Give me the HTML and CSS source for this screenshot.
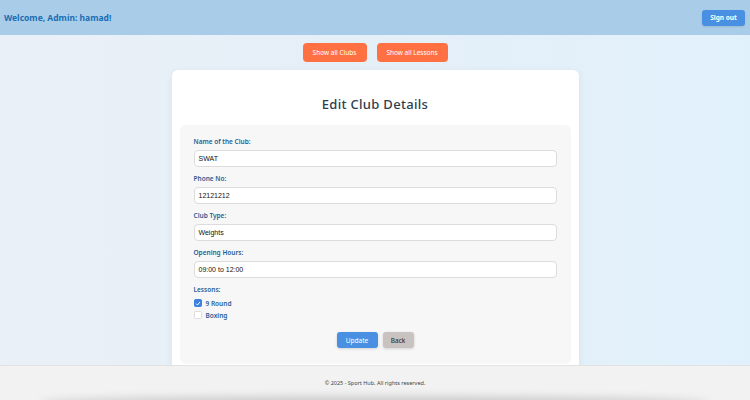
FILE: index.html
```html
<!DOCTYPE html>
<html lang="en">
<head>
<meta charset="utf-8">
<title>Edit Club</title>
<link rel="stylesheet" href="styles.css">
</head>
<body>
<header class="topbar">
  <span class="welcome">Welcome, Admin: hamad!</span>
  <button class="signout">Sign out</button>
</header>
<nav class="nav">
  <button class="nav-btn">Show all Clubs</button>
  <button class="nav-btn nav-btn-wide">Show all Lessons</button>
</nav>
<main class="card">
  <h1 class="title">Edit Club Details</h1>
  <form class="form">
    <div class="group">
      <label class="label">Name of the Club:</label>
      <div class="input">SWAT</div>
    </div>
    <div class="group">
      <label class="label">Phone No:</label>
      <div class="input">12121212</div>
    </div>
    <div class="group">
      <label class="label">Club Type:</label>
      <div class="input">Weights</div>
    </div>
    <div class="group">
      <label class="label">Opening Hours:</label>
      <div class="input">09:00 to 12:00</div>
    </div>
    <div class="lessons">
      <label class="label">Lessons:</label>
      <div class="check"><span class="box box-on"><svg viewBox="0 0 8 8" width="7" height="7"><path d="M1.5 4.2 L3.3 6 L6.6 2" fill="none" stroke="#fff" stroke-width="1.3"/></svg></span>9 Round</div>
      <div class="check"><span class="box"></span>Boxing</div>
    </div>
    <div class="actions">
      <button type="button" class="btn btn-update">Update</button>
      <button type="button" class="btn btn-back">Back</button>
    </div>
  </form>
</main>
<footer class="footer">© 2025 - Sport Hub. All rights reserved.</footer>
</body>
</html>
```

FILE: styles.css
```css
html, body {
  margin: 0;
  padding: 0;
}
body {
  font-family: "Noto Sans", "Open Sans", sans-serif;
  background: linear-gradient(90deg, #eaf0f7 0%, #e5eff8 50%, #e1f1fb 100%);
  min-height: 400px;
  overflow: hidden;
}
button {
  font-family: inherit;
  border: none;
  cursor: pointer;
}
.topbar {
  height: 35px;
  background: #a9cde8;
  display: flex;
  align-items: center;
  justify-content: space-between;
  padding: 0 5px 0 4px;
  box-sizing: border-box;
}
.welcome {
  color: #1b6db5;
  font-size: 8.5px;
  font-weight: 700;
}
.signout {
  width: 43px;
  height: 16px;
  background: #4a90e2;
  color: #fff;
  font-size: 6.5px;
  font-weight: 700;
  border-radius: 3px;
  padding: 0;
  box-shadow: 0 1px 2px rgba(0,0,0,0.1);
}
.nav {
  display: flex;
  justify-content: center;
  gap: 10px;
  padding: 8px 0 8px 0;
}
.nav-btn {
  width: 64px;
  height: 19px;
  background: #ff7043;
  color: #fff;
  font-size: 6.5px;
  border-radius: 4px;
  padding: 0;
}
.nav-btn-wide {
  width: 71px;
}
.card {
  width: 407px;
  margin: 0 auto;
  background: #fff;
  border-radius: 6px;
  box-shadow: 0 2px 8px rgba(0,0,0,0.06);
  padding: 25px 8px 8px;
  box-sizing: border-box;
}
.title {
  margin: 0 0 12px;
  text-align: center;
  font-size: 13px;
  line-height: 18px;
  font-weight: 500;
  color: #2c3e50;
  letter-spacing: 0.3px;
}
.form {
  background: #f7f7f7;
  border-radius: 6px;
  padding: 12px 14px 16px;
}
.group {
  margin-bottom: 7.5px;
}
.label {
  display: block;
  color: #2a5d92;
  font-size: 6.5px;
  font-weight: 600;
  line-height: 9px;
  margin-bottom: 3.5px;
}
.input {
  height: 17px;
  box-sizing: border-box;
  background: #fff;
  border: 1px solid #dcdcdc;
  border-radius: 4px;
  font-family: "Liberation Sans", Arial, sans-serif;
  font-size: 7px;
  color: #111;
  display: flex;
  align-items: center;
  padding: 0 4px;
}
.lessons {
  margin-top: 3px;
}
.lessons .label {
  margin-bottom: 3px;
}
.check {
  display: flex;
  align-items: center;
  gap: 4px;
  height: 12px;
  font-size: 6.5px;
  font-weight: 600;
  color: #2a5d92;
}
.box {
  width: 6px;
  height: 6px;
  border: 0.5px solid #ddd;
  border-radius: 1.5px;
  background: #fff;
  display: flex;
  align-items: center;
  justify-content: center;
}
.box-on {
  background: #3b82e0;
  border-color: #3b82e0;
}
.actions {
  display: flex;
  justify-content: center;
  gap: 5px;
  margin-top: 11px;
}
.btn {
  height: 16px;
  border-radius: 3px;
  font-size: 6.5px;
  padding: 0;
  box-shadow: 0 1px 3px rgba(0,0,0,0.15);
}
.btn-update {
  width: 41px;
  background: #4a90e2;
  color: #fff;
}
.btn-back {
  width: 31px;
  background: #c8c3c1;
  color: #222;
}
.footer {
  position: fixed;
  left: 0;
  right: 0;
  bottom: 0;
  height: 35px;
  background: #f2f2f2;
  border-top: 1px solid #e2e2e2;
  box-sizing: border-box;
  display: flex;
  align-items: center;
  justify-content: center;
  font-size: 5.5px;
  color: #444;
}
.footer::after {
  content: "";
  position: absolute;
  left: 40px;
  right: 40px;
  bottom: -12px;
  height: 12px;
  box-shadow: 0 -3px 10px rgba(0,0,0,0.18);
  border-radius: 50%;
}
```
